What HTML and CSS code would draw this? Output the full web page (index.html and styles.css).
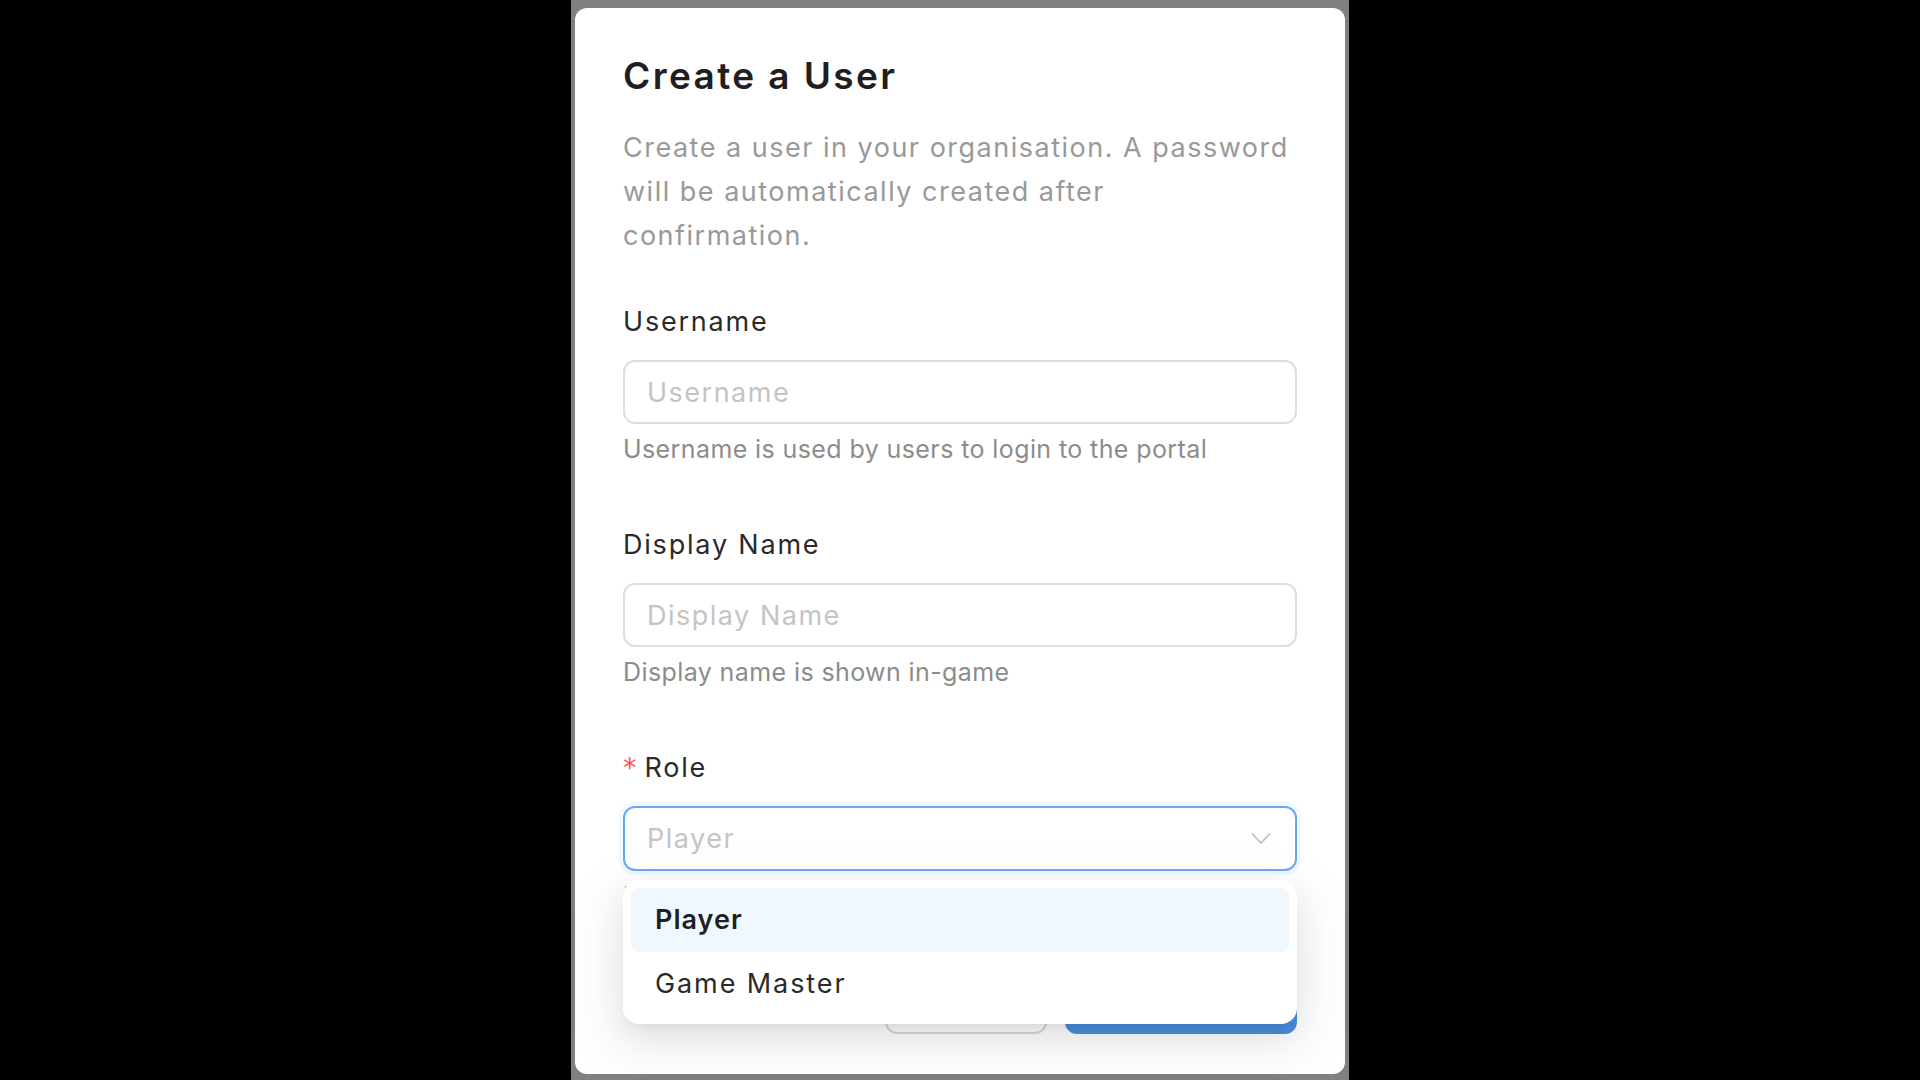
FILE: index.html
```html
<!DOCTYPE html>
<html lang="en">
<head>
  <meta charset="UTF-8">
  <title>Create a User</title>
  <meta name="viewport" content="width=device-width, initial-scale=1.0">
  <link rel="stylesheet" href="styles.css">
</head>
<body>

  <div class="screen">
    <div class="modal">
      <h1 class="modal-title">Create a User</h1>
      <p class="modal-desc">Create a user in your organisation. A password<br>will be automatically created after<br>confirmation.</p>

      <form class="form">
        <!-- Username -->
        <div class="form-item">
          <label class="form-label" for="username">Username</label>
          <input class="form-input" type="text" id="username" placeholder="Username">
          <div class="form-help">Username is used by users to login to the portal</div>
        </div>

        <!-- Display name -->
        <div class="form-item">
          <label class="form-label" for="displayName">Display Name</label>
          <input class="form-input" type="text" id="displayName" placeholder="Display Name">
          <div class="form-help">Display name is shown in-game</div>
        </div>

        <!-- Role (dropdown open) -->
        <div class="form-item">
          <label class="form-label required">Role</label>
          <div class="select-wrap">
            <div class="select focused">
              <span class="select-value">Player</span>
              <svg class="select-arrow" width="20" height="13" viewBox="0 0 20 13">
                <path d="M1 1.5 L10 11 L19 1.5" fill="none" stroke="#bfbfbf" stroke-width="1.8"/>
              </svg>
            </div>
            <div class="select-dropdown">
              <div class="select-option selected">Player</div>
              <div class="select-option">Game Master</div>
            </div>
          </div>
          <div class="form-help">Role decides what the user can manage</div>
        </div>

        <div class="modal-footer">
          <button type="button" class="btn">Cancel</button>
          <button type="button" class="btn btn-primary">Create</button>
        </div>
      </form>
    </div>
  </div>

</body>
</html>
```

FILE: styles.css
```css
body {
  margin: 0;
  background: #000;
  font-family: 'Inter', 'Liberation Sans', sans-serif;
}

.screen {
  width: 778px;
  height: 100vh;
  margin: 0 auto;
  background: #808080;
  padding: 8px 4px 0;
  box-sizing: border-box;
}

.modal {
  background: #fff;
  border-radius: 12px;
  padding: 40px 48px;
}

.modal-title {
  margin: 0;
  font-size: 37px;
  line-height: 56px;
  font-weight: 600;
  color: #1f1f1f;
  letter-spacing: 2.4px;
}

.modal-desc {
  margin: 22px 0 0;
  font-size: 27px;
  line-height: 44px;
  color: #999;
  letter-spacing: 1.5px;
  white-space: nowrap;
}

.form {
  margin-top: 42px;
}

.form-item {
  margin-bottom: 52px;
}

.form-label {
  display: block;
  font-size: 27px;
  line-height: 44px;
  padding-bottom: 16px;
  color: #2a2a2a;
  letter-spacing: 1.8px;
}

.form-label.required::before {
  content: "*";
  color: #ff4d4f;
  margin-right: 8px;
  font-family: 'DejaVu Sans', sans-serif;
  letter-spacing: 0;
}

.form-input {
  display: block;
  width: 100%;
  height: 64px;
  box-sizing: border-box;
  padding: 0 22px;
  border: 2px solid #dedede;
  border-radius: 12px;
  font-family: inherit;
  font-size: 27px;
  letter-spacing: 1.5px;
  color: #1f1f1f;
  outline: none;
}

.form-input::placeholder {
  color: #c4c4c4;
}

.form-help {
  padding-top: 3px;
  font-size: 25px;
  line-height: 44px;
  color: #8c8c8c;
  letter-spacing: 0.4px;
}

.select-wrap {
  position: relative;
}

.select {
  display: flex;
  align-items: center;
  justify-content: space-between;
  height: 65px;
  box-sizing: border-box;
  padding: 0 24px 0 22px;
  border: 2px solid #6aa8f6;
  border-radius: 12px;
  background: #fff;
}

.select.focused {
  box-shadow: 0 0 0 4px rgba(5, 145, 255, 0.06);
}

.select-value {
  font-size: 27px;
  color: #c4c4c4;
  letter-spacing: 1.5px;
}

.select-dropdown {
  position: absolute;
  top: calc(100% + 9px);
  left: 0;
  right: 0;
  z-index: 2;
  background: #fff;
  padding: 8px;
  border-radius: 16px;
  box-shadow: 0 12px 32px 0 rgba(0,0,0,0.08), 0 6px 12px -8px rgba(0,0,0,0.12), 0 18px 56px 16px rgba(0,0,0,0.05);
}

.select-option {
  height: 64px;
  line-height: 64px;
  padding: 0 24px;
  border-radius: 8px;
  font-size: 27px;
  color: #2a2a2a;
  letter-spacing: 1.9px;
}

.select-option.selected {
  background: #eff8ff;
  font-weight: 600;
  color: #1f1f1f;
  letter-spacing: 1px;
}

.modal-footer {
  display: flex;
  justify-content: flex-end;
  gap: 18px;
}

.btn {
  height: 64px;
  min-width: 162px;
  padding: 0 30px;
  border: 2px solid #d9d9d9;
  border-radius: 12px;
  background: #fff;
  font-family: inherit;
  font-size: 27px;
  color: #1f1f1f;
}

.btn-primary {
  min-width: 232px;
  border-color: #4a90e0;
  background: #4a90e0;
  color: #fff;
}
```
